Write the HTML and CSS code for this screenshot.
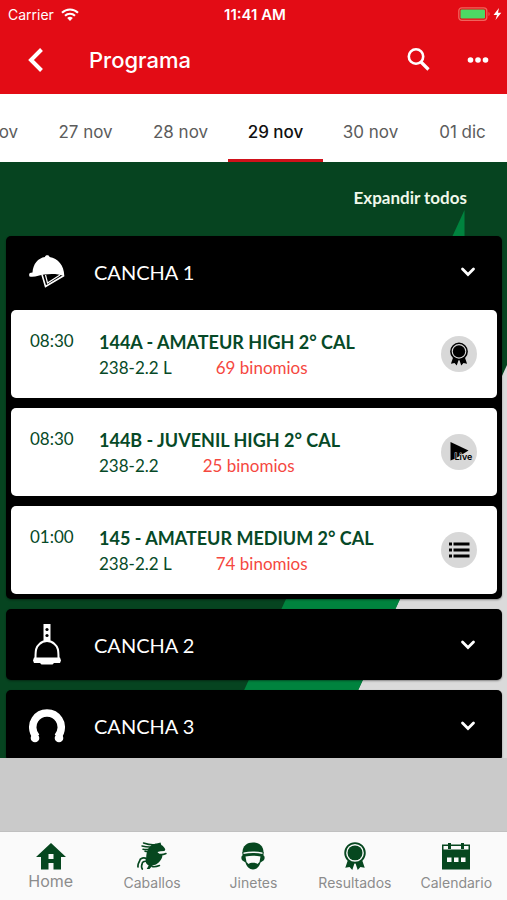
FILE: index.html
```html
<!DOCTYPE html>
<html lang="es">
<head>
<meta charset="utf-8">
<meta name="viewport" content="width=device-width, initial-scale=1">
<title>Programa</title>
<link rel="stylesheet" href="styles.css">
</head>
<body>
<svg class="sprite" aria-hidden="true">
  <symbol id="chevron" viewBox="0 0 16 16"><path d="M2.500 5 8 10.500 13.500 5" fill="none" stroke="currentColor" stroke-width="2.800" stroke-linecap="round"/></symbol>
  <symbol id="rosette" viewBox="0 0 28 36">
    <path d="M6 20 1.500 33l5.500-1 3.500 4 3-9h1l3 9 3.500-4 5.500 1L22 20z" fill="currentColor"/>
    <circle cx="14" cy="14" r="12.600" class="rosette-ring" stroke="currentColor" stroke-width="2.400"/>
    <circle cx="14" cy="14" r="9.600" fill="currentColor"/>
  </symbol>
</svg>
<div class="app">
  <header class="top">
    <div class="status">
      <span class="carrier">Carrier
        <svg class="wifi" viewBox="0 0 18 13" aria-hidden="true"><path d="M1 4.800a11.500 11.500 0 0 1 16 0M4 7.800a7.200 7.200 0 0 1 10 0" fill="none" stroke="#fff" stroke-width="2.100"/><path d="M6.200 10a4 4 0 0 1 5.600 0L9 12.900z" fill="#fff"/></svg>
      </span>
      <span class="clock">11:41 AM</span>
      <span class="power">
        <svg viewBox="0 0 44 16" aria-hidden="true"><rect x=".8" y="1.800" width="28" height="12.500" rx="3" fill="none" stroke="#f0645c" stroke-width="1.300"/><rect x="2.500" y="3.500" width="24.500" height="9" rx="1.200" fill="#4cd964"/><path d="M30.500 6c1.500.5 1.500 3.500 0 4z" fill="#f0645c"/><path d="m41 2-5.500 7H39l-1.500 5 5.800-7.200H40z" fill="#fff"/></svg>
      </span>
    </div>
    <div class="bar">
      <button class="icon-btn back" aria-label="Atrás"><svg viewBox="0 0 24 28" aria-hidden="true"><path d="M17.500 3.500 7 14l10.500 10.500" fill="none" stroke="#fff" stroke-width="4"/></svg></button>
      <h1>Programa</h1>
      <button class="icon-btn" aria-label="Buscar"><svg viewBox="0 0 24 24" aria-hidden="true"><circle cx="9" cy="8.500" r="7.200" fill="none" stroke="#fff" stroke-width="2.600"/><path d="m14 14 7.500 7.500" stroke="#fff" stroke-width="3.200"/></svg></button>
      <button class="icon-btn" aria-label="Más opciones"><svg viewBox="0 0 24 24" aria-hidden="true"><g fill="#fff"><circle cx="4.500" cy="12" r="2.800"/><circle cx="12" cy="12" r="2.800"/><circle cx="19.500" cy="12" r="2.800"/></g></svg></button>
    </div>
  </header>

  <nav class="dates" aria-label="Fechas">
    <a href="#d26">26 nov</a>
    <a href="#d27">27 nov</a>
    <a href="#d28">28 nov</a>
    <a href="#d29" class="current" aria-current="date">29 nov</a>
    <a href="#d30">30 nov</a>
    <a href="#d01">01 dic</a>
  </nav>

  <main class="program">
    <svg class="backdrop" viewBox="0 0 507 596" preserveAspectRatio="none" aria-hidden="true">
      <path d="M0 0h507v596H0z" fill="#064420"/>
      <path d="M507 203v393H327z" fill="#dadada"/>
      <path d="M464.500 48v249L327 596H213z" fill="#00833e"/>
    </svg>
    <button class="expand">Expandir todos</button>

    <section class="panel">
      <h2><button class="panel-head" aria-expanded="true">
        <svg class="court" viewBox="0 0 36 36" aria-hidden="true"><path d="M.5 22.500c-1-2.500 0-4 3-4C4 10 9 4 16 3c0-2.200 4.500-2.200 4.500 0C29 4.500 35 11 35.300 22c-6-2.200-13-2.500-20-1.500-5 .6-9 2.800-14.800 2z" fill="#fff"/><path d="m13 20.500 3.500 12L35 21.500" fill="none" stroke="#fff" stroke-width="1.600"/><path d="m16.500 21 2 8L31 21" fill="none" stroke="#fff" stroke-width="1.200"/></svg>
        <span>CANCHA 1</span>
        <svg class="chev" aria-hidden="true"><use href="#chevron"/></svg>
      </button></h2>
      <ul class="events">
        <li class="event">
          <time>08:30</time>
          <div class="info"><h3>144A - AMATEUR HIGH 2° CAL</h3><p><span class="rule">238-2.2 L</span><span class="pairs">69 binomios</span></p></div>
          <button class="round" aria-label="Resultados"><svg class="medal" aria-hidden="true"><use href="#rosette"/></svg></button>
        </li>
        <li class="event">
          <time>08:30</time>
          <div class="info"><h3>144B - JUVENIL HIGH 2° CAL</h3><p><span class="rule">238-2.2</span><span class="pairs">25 binomios</span></p></div>
          <button class="round" aria-label="En vivo"><svg class="live" viewBox="0 0 36 36" aria-hidden="true"><path d="M9.500 8v18.500l5-2 13-8z"/><text x="13.500" y="25.500">Live</text></svg></button>
        </li>
        <li class="event">
          <time>01:00</time>
          <div class="info"><h3>145 - AMATEUR MEDIUM 2° CAL</h3><p><span class="rule">238-2.2 L</span><span class="pairs">74 binomios</span></p></div>
          <button class="round" aria-label="Lista"><svg class="list" viewBox="0 0 22 16" aria-hidden="true"><path d="M1 .5h3v3H1zM5.500.5h16v3h-16zM1 6.500h3v3H1zM5.500 6.500h16v3h-16zM1 12.500h3v3H1zM5.500 12.500h16v3h-16z"/></svg></button>
        </li>
      </ul>
    </section>

    <section class="panel">
      <h2><button class="panel-head" aria-expanded="false">
        <svg class="court tall" viewBox="0 0 28 42" aria-hidden="true"><path d="M10.500 0h7v18h-7z" fill="#fff"/><g fill="#000"><circle cx="14" cy="5.500" r="1.600"/><circle cx="14" cy="11.500" r="1.600"/></g><path d="M2.500 34c0-8 .5-11 4-14 2.500-2.500 5-3 7.500-3s5 .5 7.500 3c3.500 3 4 6 4 14" fill="none" stroke="#fff" stroke-width="2"/><path d="M1 33.500h26l1 3-1 2.500h-6l-1.500 1.500h-11L7 39H1l-1-2.500z" fill="#fff"/></svg>
        <span>CANCHA 2</span>
        <svg class="chev" aria-hidden="true"><use href="#chevron"/></svg>
      </button></h2>
    </section>

    <section class="panel">
      <h2><button class="panel-head" aria-expanded="false">
        <svg class="court" viewBox="0 0 36 36" aria-hidden="true"><path d="M7.500 29C2.500 23.500 3 16 6 11.500 9.500 6 14 5 18 5s8.500 1 12 6.500c3 4.500 3.500 12-1.500 17.500" fill="none" stroke="#fff" stroke-width="7.500"/><circle cx="6" cy="30" r="4.300" fill="#fff"/><circle cx="30" cy="30" r="4.300" fill="#fff"/></svg>
        <span>CANCHA 3</span>
        <svg class="chev" aria-hidden="true"><use href="#chevron"/></svg>
      </button></h2>
    </section>
  </main>

  <div class="banner"></div>

  <nav class="tabs" aria-label="Principal">
    <a href="#home" class="home"><svg viewBox="0 0 30 28" aria-hidden="true"><path d="M15 1 0 15h5v12.500h7.500V21h5v6.500H25V15h5z" fill="currentColor"/><rect x="12.500" y="12" width="5" height="5" fill="#fafafa"/></svg>Home</a>
    <a href="#caballos"><svg viewBox="0 0 30 28" aria-hidden="true"><path d="m23.500.5.8 2.500c2 1 3.200 2.500 4 4.500l-.8 1.500-4 .3-3 .7 1.500 2 3.500.6c0 4-2.500 7.500-6.500 10l-3.500 1-3 3.500h-2.800l2-3.500c-3-1.500-3.700-4.500-2.500-8 .2-3.500.5-6.500 2.500-9.600L15 2.500c3-.8 6.500-1 8.500-2z" fill="currentColor"/><path d="M19 2.500c-4 1-8 0-12.500-1.500M17 4.500C13 5.500 9 5 5 4M15.500 6.500c-3 1.500-6 1-9.500.8M14 9c-2.500 1-4 .8-6 .3M21 12c2.500 1 5 .8 8-.5M15 24.500c3 .5 5 0 7.500-1" fill="none" stroke="currentColor" stroke-width="1.500" stroke-linecap="round"/><path d="M10 17c-3-2-7-1-7.500 2-.3 1.500-2 2.500-1.500 6M10 19.500c-3-.8-5 .5-5 3-.5 1.500-1 2.500.3 4.500" fill="none" stroke="currentColor" stroke-width="1.700" stroke-linecap="round"/></svg>Caballos</a>
    <a href="#jinetes"><svg viewBox="0 0 30 28" aria-hidden="true"><path d="M4.500 11.500C4 4 9 .5 15 .5S26 4 25.500 11.500z" fill="currentColor"/><path d="M4.500 10v3.500c-1.500.5-1.500 4 0 5l3 2c1 4 4 7 7.500 7s6.500-3 7.500-7l3-2c1.500-1 1.500-4.500 0-5V10" fill="currentColor"/><path d="M5.500 10.500c6-1.200 13-1.200 19 0v1.500c-6-1.200-13-1.200-19 0zM7.500 14.500c5-1 10-1 15 0L21.500 20l-2 2c-1.500-1.700-7.500-1.700-9 0l-2-2z" fill="#fafafa"/></svg>Jinetes</a>
    <a href="#resultados"><svg class="light" aria-hidden="true"><use href="#rosette"/></svg>Resultados</a>
    <a href="#calendario"><svg viewBox="0 0 30 28" aria-hidden="true"><path d="M1 2.500h28v25H1z" fill="currentColor"/><path d="M2.500 4h25v3.500h-25z" fill="#fafafa"/><path d="M7 1h3v6H7zM20 1h3v6h-3z" fill="currentColor"/><path d="M6 15.500h4.500V20H6zM13 15.500h4.500V20H13zM20 15.500h4.500V20H20z" fill="#fafafa"/></svg>Calendario</a>
  </nav>
</div>
</body>
</html>
```
FILE: styles.css
```css
* { box-sizing: border-box; }
body { margin: 0; font-family: Inter, "Liberation Sans", sans-serif; }
h1, h2, h3, p, ul { margin: 0; padding: 0; font-weight: inherit; }
button { border: 0; padding: 0; background: none; color: inherit; font: inherit; cursor: pointer; }
a { text-decoration: none; color: inherit; }
svg { display: block; }
.sprite { position: absolute; width: 0; height: 0; }

.app { display: flex; flex-direction: column; height: 100vh; background: #cacaca; }

.top { background: #e30c15; color: #fff; }
.status { display: grid; grid-template-columns: 1fr auto 1fr; align-items: center; height: 28px; padding: 0 5px 0 8px; font-size: 14px; }
.carrier { display: flex; align-items: center; gap: 7px; }
.wifi { width: 18px; height: 13px; }
.clock { font-size: 15px; font-weight: 600; }
.power svg { width: 44px; height: 16px; margin-left: auto; }
.bar { display: flex; align-items: center; height: 66px; padding: 0 17px 2px 24px; }
.bar h1 { flex: 1; margin-left: 41px; font-size: 22px; font-weight: 500; }
.icon-btn svg { width: 24px; height: 24px; }
.icon-btn.back svg { height: 28px; }
.icon-btn + .icon-btn { margin-left: 35px; }

.dates { display: flex; flex: none; justify-content: flex-end; height: 68px; overflow: hidden; background: #fff; color: #5c5c5c; font-size: 17px; }
.dates a { flex: none; display: flex; align-items: center; justify-content: center; width: 95px; padding-top: 10px; border-bottom: 3px solid transparent; white-space: nowrap; }
.dates a:last-child { width: 89px; }
.dates .current { color: #111; border-color: #d0121b; font-weight: 500; }

.program { position: relative; flex: 1; min-height: 0; overflow: hidden; padding: 0 5px 0 6px; background: #064420; font-family: Lato, sans-serif; display: flex; flex-direction: column; }
.backdrop { position: absolute; inset: 0; width: 100%; height: 100%; }
.expand { position: relative; flex: none; align-self: flex-end; height: 74px; padding: 0 35px 4px 0; color: #f0f8ea; font-size: 17px; font-weight: 700; }
.panel { position: relative; flex: none; margin-bottom: 10px; padding: 0 5px; border-radius: 5px; background: #000; box-shadow: 0 1px 2px rgba(0, 0, 0, .4); }
.panel-head { display: flex; align-items: center; width: 100%; height: 71px; padding: 0 21px 0 18px; color: #fff; font-size: 20px; text-align: left; }
.panel-head span { flex: 1; margin-left: 29px; }
.court { width: 36px; height: 36px; }
.court.tall { height: 42px; }
.chev { width: 16px; height: 16px; }

.events { display: grid; gap: 10px; padding: 3px 0 5px; list-style: none; }
.event { display: flex; align-items: center; height: 88px; padding: 0 20px 0 19px; border-radius: 5px; background: #fff; color: #064927; font-size: 17px; line-height: 25px; }
.event time { align-self: flex-start; width: 69px; padding-top: 18px; }
.info { flex: 1; padding-top: 2px; }
.info h3 { font-size: 18px; font-weight: 700; }
.rule { margin-right: 44px; }
.pairs { color: #f5483f; }
.round { display: grid; place-items: center; width: 36px; height: 36px; border-radius: 50%; background: #d8d8d8; color: #000; }
.medal { width: 18px; height: 24px; }
.live { width: 36px; height: 36px; overflow: visible; }
.live text { font: 600 9px Inter, sans-serif; stroke: #d8d8d8; stroke-width: 1px; paint-order: stroke; }
.list { width: 22px; height: 16px; }
.rosette-ring { fill: var(--ring, #d8d8d8); }
.light { --ring: #fafafa; }

.banner { flex: none; height: 73px; background: #cacaca; }
.tabs { display: grid; flex: none; grid-template-columns: repeat(5, 1fr); height: 69px; border-top: 1px solid #c0c0c0; background: #fafafa; color: #8c8c8c; font-size: 14px; }
.tabs a { display: flex; flex-direction: column; align-items: center; gap: 4px; padding-top: 10px; }
.tabs .home { gap: 1px; font-size: 16px; }
.tabs svg { width: 30px; height: 28px; color: #06471f; }
```
